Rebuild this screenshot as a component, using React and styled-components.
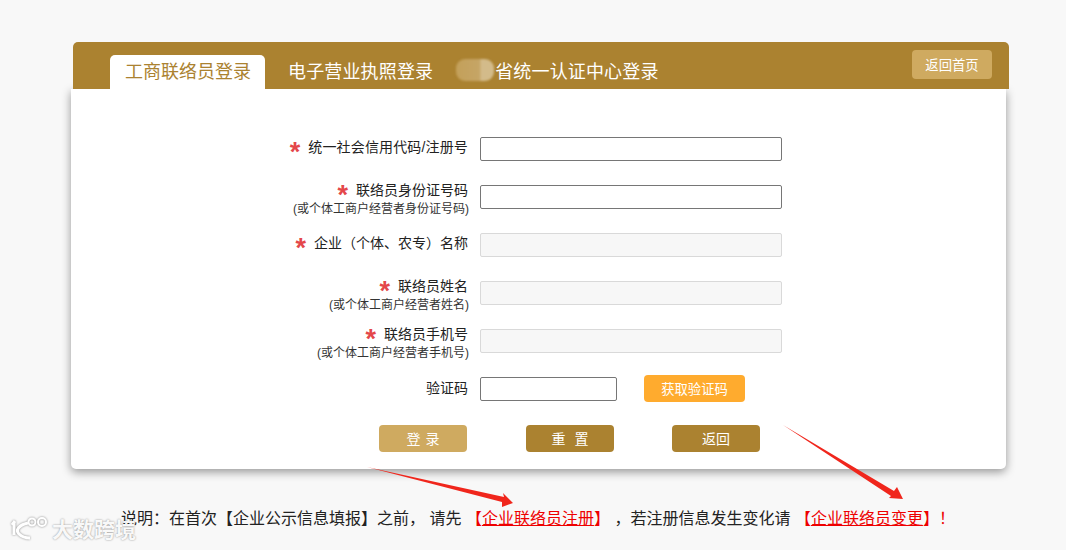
import styled, { createGlobalStyle } from "styled-components";

const GlobalStyle = createGlobalStyle`
  html, body {
    margin: 0;
    padding: 0;
    background: #f8f8f8;
    overflow: hidden;
  }
  body {
    font-family: "Liberation Sans", "Noto Sans CJK SC", sans-serif;
    font-size: 14px;
    color: #222;
  }
`;

const Page = styled.div`
  position: relative;
  width: 1066px;
  height: 550px;
  padding: 42px 60px 0 71px;
  box-sizing: border-box;
`;

const Header = styled.div`
  position: relative;
  z-index: 1;
  display: flex;
  justify-content: space-between;
  width: 936px;
  height: 47px;
  margin-left: 2px;
  padding: 8px 17px 0 37px;
  box-sizing: border-box;
  background: #ab8230;
  border-radius: 5px 5px 0 0;
`;

const Tabs = styled.div`
  display: flex;
  align-items: flex-end;
`;

const Tab = styled.a`
  display: flex;
  align-items: center;
  height: 34px;
  padding: ${(p) => (p.$active ? "0 14px 4px 15px" : "0 0 4px")};
  margin-right: 23px;
  box-sizing: border-box;
  border-radius: 5px 5px 0 0;
  background: ${(p) => (p.$active ? "#fff" : "transparent")};
  color: ${(p) => (p.$active ? "#ab8230" : "#fff")};
  font-size: 18px;
  letter-spacing: ${(p) => (p.$active ? "0" : "0.15px")};
  white-space: nowrap;
`;

const BlurredName = styled.span`
  display: inline-block;
  width: 38px;
  height: 22px;
  margin-right: 1px;
  background: linear-gradient(90deg, #c3a05a 0%, #c6a566 62%, #d3bb8a 66%, #d3bb8a 100%);
  border-radius: 9px;
  filter: blur(1px);
`;

const HomeButton = styled.button`
  width: 80px;
  height: 29px;
  border: 0;
  border-radius: 4px;
  background: #cfaa60;
  color: #fff;
  font: 13.33px "Liberation Sans", "Noto Sans CJK SC", sans-serif;
`;

const Card = styled.div`
  width: 935px;
  height: 380px;
  padding-top: 48px;
  box-sizing: border-box;
  background: #fff;
  border-radius: 0 0 5px 5px;
  box-shadow: 0 3px 10px rgba(0, 0, 0, 0.4);
`;

const Form = styled.form`
  display: grid;
  grid-template-columns: 397px 302px;
  grid-auto-rows: 48px;
  column-gap: 12px;
`;

const Label = styled.label`
  display: flex;
  flex-direction: column;
  align-items: flex-end;
  margin-top: ${(p) => p.$top || "0"};
  line-height: 20px;
  white-space: nowrap;
`;

const LabelMain = styled.span`
  display: flex;
  align-items: center;
  height: 20px;
  letter-spacing: ${(p) => p.$track || "0"};
`;

const Star = styled.span`
  margin-right: 8px;
  color: #e4474a;
  font: bold 27px/20px "Liberation Sans", sans-serif;
  transform: translateY(5px);
`;

const LabelSub = styled.span`
  margin-right: -1px;
  font-size: 12px;
  line-height: 18px;
  color: #333;
`;

const Field = styled.input`
  display: block;
  width: ${(p) => p.$width || "302px"};
  height: 24px;
  padding: 0 4px;
  box-sizing: border-box;
  border: 1px solid ${(p) => (p.disabled ? "#d9d9d9" : "#767676")};
  border-radius: 2px;
  background: ${(p) => (p.disabled ? "#f7f7f7" : "#fff")};
`;

const CodeRow = styled.div`
  display: flex;
  align-items: flex-start;
  gap: 27px;
`;

const CodeButton = styled.button`
  width: 101px;
  height: 27px;
  margin-top: -2px;
  border: 0;
  border-radius: 4px;
  background: #ffab2e;
  color: #fff;
  font: 13.33px "Liberation Sans", "Noto Sans CJK SC", sans-serif;
`;

const Actions = styled.div`
  display: flex;
  padding-left: 308px;
`;

const ActionButton = styled.button`
  width: 88px;
  height: 27px;
  margin-right: ${(p) => p.$gap || "59px"};
  padding: 0 0 2px;
  border: 0;
  border-radius: 4px;
  background: ${(p) => (p.$light ? "#cfaa60" : "#ab8230")};
  color: #fff;
  font: 14px "Liberation Sans", "Noto Sans CJK SC", sans-serif;
  word-spacing: ${(p) => p.$spread || "0"};
`;

const Note = styled.p`
  margin: 40px 0 0 50px;
  font-size: 16px;
  line-height: 20px;
  white-space: nowrap;
  color: #222;
`;

const Red = styled.span`
  color: #e00;
`;

const RedLink = styled.a`
  color: #e00;
  text-decoration: underline;
`;

const Overlay = styled.svg`
  position: absolute;
  left: 0;
  top: 0;
  pointer-events: none;
`;

const Watermark = styled.div`
  position: absolute;
  left: 10px;
  top: 514px;
  display: flex;
  align-items: center;
  gap: 4px;
  color: rgba(255, 255, 255, 0.95);
  font-size: 21px;
  font-weight: 700;
  line-height: 32px;
  text-shadow: 0 0 2px rgba(0, 0, 0, 0.45);
`;

const LogoMark = styled.svg`
  filter: drop-shadow(0 0 1px rgba(0, 0, 0, 0.45));
`;

function Arrows() {
  return (
    <Overlay width="1066" height="550" viewBox="0 0 1066 550">
      <path
        d="M367 467 L504 497 L503 493 L513 503 L502 507 L502 502 Z"
        fill="#f0261c"
      />
      <path
        d="M783 425 L894 491 L897 487 L903 499 L889 498 L891 496 Z"
        fill="#f0261c"
      />
    </Overlay>
  );
}

function WatermarkLogo() {
  return (
    <LogoMark width="38" height="32" viewBox="0 0 38 32" fill="none" stroke="#fff">
      <path d="M5 7 L2 11 M4 9 L4 21" strokeWidth="3" />
      <path d="M18 9 C9 11 5 16 9 20 C12 23 16 24 20 24" strokeWidth="3" />
      <circle cx="22" cy="8" r="3.5" strokeWidth="2" />
      <circle cx="32" cy="8" r="4" strokeWidth="2" />
    </LogoMark>
  );
}

function App() {
  return (
    <Page>
      <GlobalStyle />
      <Header>
        <Tabs>
          <Tab $active>工商联络员登录</Tab>
          <Tab>电子营业执照登录</Tab>
          <Tab>
            <BlurredName />
            省统一认证中心登录
          </Tab>
        </Tabs>
        <HomeButton>返回首页</HomeButton>
      </Header>
      <Card>
        <Form>
          <Label>
            <LabelMain $track="0.15px">
              <Star>*</Star>统一社会信用代码/注册号
            </LabelMain>
          </Label>
          <Field />
          <Label $top="-5px">
            <LabelMain>
              <Star>*</Star>联络员身份证号码
            </LabelMain>
            <LabelSub>(或个体工商户经营者身份证号码)</LabelSub>
          </Label>
          <Field />
          <Label>
            <LabelMain>
              <Star>*</Star>企业（个体、农专）名称
            </LabelMain>
          </Label>
          <Field disabled />
          <Label $top="-5px">
            <LabelMain>
              <Star>*</Star>联络员姓名
            </LabelMain>
            <LabelSub>(或个体工商户经营者姓名)</LabelSub>
          </Label>
          <Field disabled />
          <Label $top="-5px">
            <LabelMain>
              <Star>*</Star>联络员手机号
            </LabelMain>
            <LabelSub>(或个体工商户经营者手机号)</LabelSub>
          </Label>
          <Field disabled />
          <Label $top="1px">
            <LabelMain>验证码</LabelMain>
          </Label>
          <CodeRow>
            <Field $width="137px" />
            <CodeButton type="button">获取验证码</CodeButton>
          </CodeRow>
        </Form>
        <Actions>
          <ActionButton type="button" $light $spread="1px">
            登 录
          </ActionButton>
          <ActionButton type="button" $spread="5px" $gap="58px">
            重 置
          </ActionButton>
          <ActionButton type="button">返回</ActionButton>
        </Actions>
      </Card>
      <Note>
        说明：在首次【企业公示信息填报】之前， 请先{" "}
        <Red>
          【<RedLink>企业联络员注册</RedLink>】
        </Red>{" "}
        ，若注册信息发生变化请{" "}
        <Red>
          【<RedLink>企业联络员变更</RedLink>】！
        </Red>
      </Note>
      <Arrows />
      <Watermark>
        <WatermarkLogo />
        大数跨境
      </Watermark>
    </Page>
  );
}

export default App;
